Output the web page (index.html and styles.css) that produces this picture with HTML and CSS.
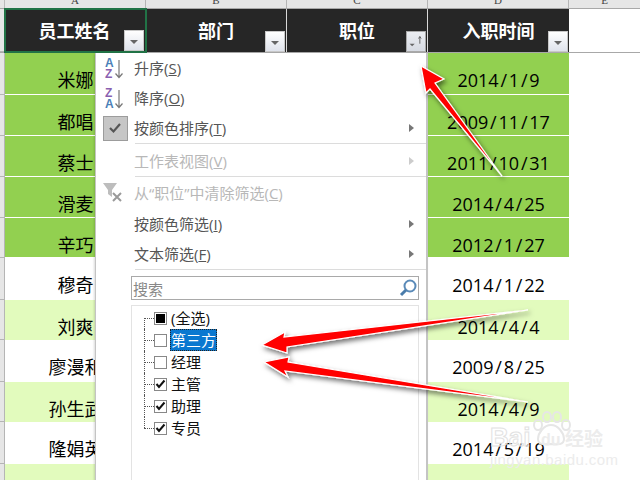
FILE: index.html
```html
<!DOCTYPE html>
<html lang="zh">
<head>
<meta charset="utf-8">
<title>筛选</title>
<link rel="stylesheet" href="styles.css">
</head>
<body>
<div class="sheet">
  <div class="row col-heads">
    <div class="corner"></div>
    <div class="ch">A</div><div class="ch">B</div><div class="ch">C</div><div class="ch">D</div><div class="ch last">E</div>
  </div>
  <div class="row heads">
    <div class="rh"></div>
    <div class="hd selected"><span>员工姓名</span><i class="fbtn"><b class="tri"></b></i></div>
    <div class="hd"><span>部门</span><i class="fbtn"><b class="tri"></b></i></div>
    <div class="hd"><span>职位</span><i class="fbtn sorted"><svg width="21" height="20" viewBox="0 0 21 20"><path d="M3 12h6l-3 3z" fill="#666"/><path d="M15 12V4M13.5 6l1.5-2.500 1.500 2.500" fill="none" stroke="#555"/></svg></i></div>
    <div class="hd"><span>入职时间</span><i class="fbtn"><b class="tri"></b></i></div>
  </div>
  <div class="row r42 green"><div class="rh"></div><div class="c">米娜</div><div class="c"></div><div class="c"></div><div class="c">2014<s>/</s>1<s>/</s>9</div></div>
  <div class="row r41 green"><div class="rh"></div><div class="c">都唱</div><div class="c"></div><div class="c"></div><div class="c">2009<s>/</s>11<s>/</s>17</div></div>
  <div class="row r41 green"><div class="rh"></div><div class="c">蔡士</div><div class="c"></div><div class="c"></div><div class="c">2011<s>/</s>10<s>/</s>31</div></div>
  <div class="row r41 green"><div class="rh"></div><div class="c">滑麦</div><div class="c"></div><div class="c"></div><div class="c">2014<s>/</s>4<s>/</s>25</div></div>
  <div class="row r40 green"><div class="rh"></div><div class="c">辛巧</div><div class="c"></div><div class="c"></div><div class="c">2012<s>/</s>1<s>/</s>27</div></div>
  <div class="row r42"><div class="rh"></div><div class="c">穆奇</div><div class="c"></div><div class="c"></div><div class="c">2014<s>/</s>1<s>/</s>22</div></div>
  <div class="row r40 pale"><div class="rh"></div><div class="c">刘爽</div><div class="c"></div><div class="c"></div><div class="c">2014<s>/</s>4<s>/</s>4</div></div>
  <div class="row r42"><div class="rh"></div><div class="c">廖漫和</div><div class="c"></div><div class="c"></div><div class="c">2009<s>/</s>8<s>/</s>25</div></div>
  <div class="row r40 pale"><div class="rh"></div><div class="c">孙生武</div><div class="c"></div><div class="c"></div><div class="c">2014<s>/</s>4<s>/</s>9</div></div>
  <div class="row r42"><div class="rh"></div><div class="c">隆娟英</div><div class="c"></div><div class="c"></div><div class="c">2014<s>/</s>5<s>/</s>19</div></div>
  <div class="row r40 pale"><div class="rh"></div><div class="c"></div><div class="c"></div><div class="c"></div><div class="c"></div></div>

  <div class="menu">
    <div class="mi">
      <span class="ic"><svg width="30" height="30" viewBox="0 0 30 30"><text x="5" y="14" class="az blue">A</text><text x="5" y="25" class="az purple">Z</text><path d="M19 7v17M15.500 20.500L19 24.500l3.500-4" fill="none" stroke="#777" stroke-width="1.200"/></svg></span>
      <span>升序(<u>S</u>)</span>
    </div>
    <div class="mi">
      <span class="ic"><svg width="30" height="30" viewBox="0 0 30 30"><text x="5" y="14" class="az purple">Z</text><text x="5" y="25" class="az blue">A</text><path d="M19 7v17M15.500 20.500L19 24.500l3.500-4" fill="none" stroke="#777" stroke-width="1.200"/></svg></span>
      <span>降序(<u>O</u>)</span>
    </div>
    <div class="mi">
      <span class="ic"><span class="chk"><svg width="14" height="12" viewBox="0 0 14 12"><path d="M2 6l3.500 3.500L12 2" fill="none" stroke="#555" stroke-width="2.200"/></svg></span></span>
      <span>按颜色排序(<u>T</u>)</span><b class="more"></b>
    </div>
    <div class="sep first"></div>
    <div class="mi off">
      <span class="ic"></span>
      <span>工作表视图(<u>V</u>)</span><b class="more"></b>
    </div>
    <div class="sep second"></div>
    <div class="mi off clear">
      <span class="ic"><svg width="30" height="30" viewBox="0 0 30 30"><path d="M3 5h14l-5 7v7l-4-3v-4z" fill="#bdbdbd"/><path d="M13 15l8 8M21 15l-8 8" stroke="#9a9a9a" stroke-width="2"/></svg></span>
      <span>从“职位”中清除筛选(<u>C</u>)</span>
    </div>
    <div class="mi">
      <span class="ic"></span>
      <span>按颜色筛选(<u>I</u>)</span><b class="more"></b>
    </div>
    <div class="mi">
      <span class="ic"></span>
      <span>文本筛选(<u>F</u>)</span><b class="more"></b>
    </div>
    <div class="sep wide"></div>
    <div class="search">
      <span>搜索</span>
      <svg width="20" height="20" viewBox="0 0 20 20"><circle cx="12" cy="8" r="5.500" fill="none" stroke="#5a8ab8" stroke-width="2"/><path d="M8 12l-5 5" stroke="#4a7cab" stroke-width="3"/></svg>
    </div>
    <div class="tree">
      <div class="node"><i class="box mixed"></i><span>(全选)</span></div>
      <div class="node current"><i class="box"></i><span>第三方</span></div>
      <div class="node"><i class="box"></i><span>经理</span></div>
      <div class="node"><i class="box on"><svg width="11" height="10" viewBox="0 0 11 10"><path d="M1.500 5l2.500 3 5.500-6.500" fill="none" stroke="#111" stroke-width="2"/></svg></i><span>主管</span></div>
      <div class="node"><i class="box on"><svg width="11" height="10" viewBox="0 0 11 10"><path d="M1.500 5l2.500 3 5.500-6.500" fill="none" stroke="#111" stroke-width="2"/></svg></i><span>助理</span></div>
      <div class="node end"><i class="box on"><svg width="11" height="10" viewBox="0 0 11 10"><path d="M1.500 5l2.500 3 5.500-6.500" fill="none" stroke="#111" stroke-width="2"/></svg></i><span>专员</span></div>
    </div>
  </div>

  <svg class="arrows" width="640" height="480" viewBox="0 0 640 480">
    <defs>
      <filter id="sh" x="-20%" y="-20%" width="140%" height="140%"><feDropShadow dx="2" dy="3" stdDeviation="2.500" flood-color="#000" flood-opacity=".55"/></filter>
    </defs>
    <g fill="#ff0000" stroke="#fff" stroke-width="1.200" stroke-linejoin="miter" filter="url(#sh)">
      <polygon points="421,66 444,79 435,83 502,176 430,89 426,93"/>
      <polygon points="262,345 285,332 284,337 528,310 287,347 287,353"/>
      <polygon points="264,362 289,357 288,362 528,402 285,371 288,377"/>
    </g>
  </svg>

  <div class="mark">
    <svg class="paw" width="42" height="40" viewBox="0 0 42 40"><g fill="none" stroke="#e6e6e6" stroke-width="2"><ellipse cx="8" cy="15" rx="4" ry="5"/><ellipse cx="17" cy="7" rx="4" ry="5"/><ellipse cx="27" cy="7" rx="4" ry="5"/><ellipse cx="36" cy="15" rx="4" ry="5"/><path d="M21 15c-7 0-13 8-13 14 0 6 7 6 13 5 6 1 13 1 13-5 0-6-6-14-13-14z"/></g></svg>
    <span class="bai">Bai</span><span class="du">du</span><span class="jy">经验</span>
    <span class="url">jingyan.baidu.com</span>
  </div>
</div>
</body>
</html>
```
FILE: styles.css
```css
* { box-sizing: border-box; }
html, body { margin: 0; height: 480px; overflow: hidden; background: #fff; }
body { font-family: "Noto Sans CJK SC", "Noto Sans", sans-serif; }

.sheet { position: relative; width: 640px; height: 480px; overflow: hidden; }
.row { display: grid; grid-template-columns: 5px 141px 141px 141px 141px 1fr; }
.col-heads { height: 9px; background: #e6e6e6; border-bottom: 1px solid #a8a8a8; }
.corner { border-right: 1px solid #bbb; }
.ch { font: 11px/0 "Liberation Serif", serif; color: #444; text-align: center; border-right: 1px solid #b5b5b5; overflow: hidden; }
.ch.last { border-right: 0; }

.rh { background: #e6e6e6; border-right: 1px solid #b5b5b5; border-bottom: 1px solid #b5b5b5; }

.heads { height: 44px; border-bottom: 1px solid #a8a8a8; }
.hd { position: relative; background: #262626; color: #fff; font-weight: 700; font-size: 18px; line-height: 24px; text-align: center; padding-top: 9px; border-right: 1px solid #d8d8d8; }
.hd:last-child { border-right: 0; }
.hd.selected { outline: 2px solid #217346; outline-offset: -1px; border: 1px solid #fff; z-index: 2; padding: 8px 2px 0 0; }
.fbtn { position: absolute; right: 1px; bottom: 0; width: 20px; height: 21px; background: linear-gradient(#ffffff, #dfe3ec); border: 1px solid #c8c8c8; display: flex; align-items: center; justify-content: center; }
.fbtn.sorted { background: linear-gradient(#eceef2, #d6dae2); border-color: #a9a9a9; }
.tri { width: 0; height: 0; border-style: solid; border-width: 4px 4px 0; border-color: #666 transparent transparent; margin-top: 3px; }

.r42 { height: 42px; }
.r41 { height: 41px; }
.r40 { height: 40px; }
.c { font-size: 18px; line-height: 24px; color: #000; text-align: center; padding-top: 15px; white-space: nowrap; overflow: hidden; font-family: "Open Sans", "Noto Sans CJK SC", sans-serif; }
.c s { text-decoration: none; padding: 0 1.800px; }
.green .c { background: #92d050; border-bottom: 1px solid #fff; }
.pale .c { background: #e2fbbd; }

.menu { position: absolute; left: 95px; top: 53px; width: 333px; height: 427px; background: #fff; border-left: 1px solid #c4c4c4; border-right: 2px solid #c4c4c4; box-shadow: -1px 1px 2px rgba(0,0,0,.15); font-size: 15px; color: #555; z-index: 3; font-family: "Open Sans", "Noto Sans CJK SC", sans-serif; }
.mi { height: 30px; display: flex; align-items: center; position: relative; line-height: 30px; }
.mi.off { color: #b8b8b8; }
.mi.clear { margin-bottom: 1px; }
.ic { width: 38px; height: 30px; flex: none; display: flex; align-items: center; justify-content: center; }
.chk { width: 25px; height: 25px; background: #c6c6c6; border: 1px solid #9c9c9c; display: flex; align-items: center; justify-content: center; }
.az { font: 700 12px "Liberation Sans", sans-serif; }
.blue { fill: #4a7fb8; }
.purple { fill: #8a5fb0; }
.more { position: absolute; left: 313px; top: 11px; width: 0; height: 0; border-style: solid; border-width: 4px 0 4px 5px; border-color: transparent transparent transparent #777; }
.off .more { border-left-color: #ccc; }
.sep { height: 1px; background: #dcdcdc; margin: 0 0 1px 39px; }
.sep.first { margin-bottom: 2px; }
.sep.wide { margin: 0 0 6px 39px; }

.search { margin-left: 35px; width: 288px; height: 24px; border: 1px solid #a9a9a9; display: flex; align-items: center; justify-content: space-between; padding: 0 0 0 1px; color: #888; }
.tree { margin: 5px 0 0 35px; width: 288px; height: 180px; border: 1px solid #e3e3e3; padding: 1px 0 0 22px; font-size: 15px; color: #111; }
.node { height: 22px; display: flex; align-items: center; gap: 4px; line-height: 22px; position: relative; }
.node::before { content: ""; position: absolute; left: -10px; top: 0; height: 100%; width: 10px; border-left: 1px dotted #555; }
.node::after { content: ""; position: absolute; left: -10px; top: 50%; width: 10px; border-top: 1px dotted #555; }
.node.end::before { height: 50%; }
.node:first-child::before { top: 50%; height: 50%; }
.box { width: 13px; height: 13px; flex: none; border: 1px solid #888; background: #fff; display: flex; align-items: center; justify-content: center; }
.box.mixed::after { content: ""; width: 9px; height: 9px; background: #000; }
.current span { background: #0a78d0; color: #fff; outline: 1px dotted #222; outline-offset: -1px; padding: 0 1px; margin-left: -1px; }

.arrows { position: absolute; left: 0; top: 0; z-index: 4; pointer-events: none; }

.mark { position: absolute; left: 490px; top: 410px; width: 130px; height: 60px; z-index: 5; color: #ececec; }
.paw { position: absolute; left: 40px; top: 0; }
.bai, .du, .jy, .url { position: absolute; white-space: nowrap; }
.bai { left: 0; top: 12px; font: 700 26px/30px "Liberation Sans", sans-serif; color: rgba(255,255,255,.5); -webkit-text-stroke: 1px #e2e2e2; }
.du { left: 51px; top: 20px; font: 700 16px/20px "Liberation Sans", sans-serif; }
.jy { left: 75px; top: 16px; font-size: 19px; line-height: 24px; font-weight: 700; }
.url { left: 0; top: 41px; font: 15px/18px "Liberation Sans", sans-serif; letter-spacing: .45px; }
```
